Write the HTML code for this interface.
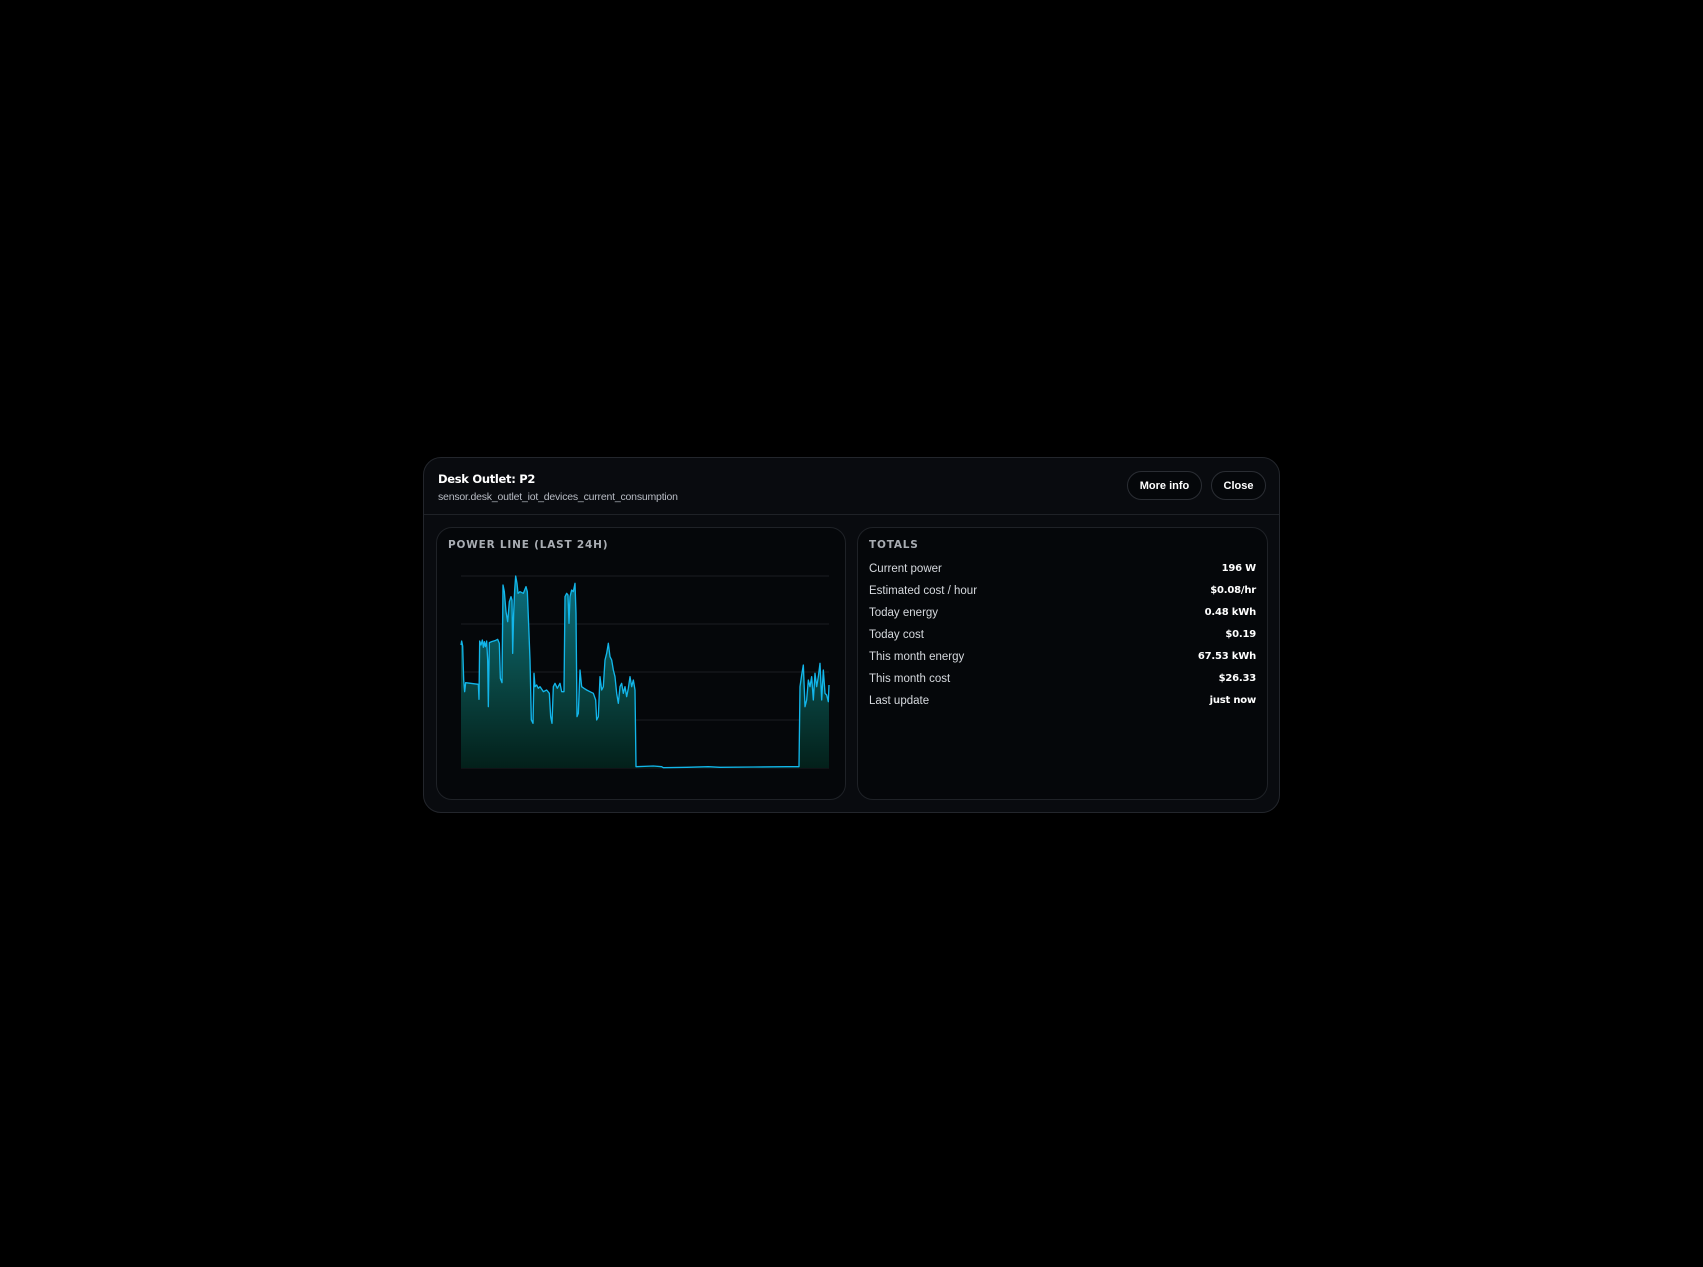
<!DOCTYPE html>
<html><head><meta charset="utf-8"><style>
html,body{margin:0;padding:0;background:#000;width:1703px;height:1267px;overflow:hidden;font-family:"DejaVu Sans","Liberation Sans",sans-serif;}
.modal{position:absolute;left:423px;top:457px;width:857px;height:356px;background:#090b0f;border:1px solid #23262c;border-radius:18px;box-sizing:border-box;}
.hdr{position:absolute;left:0;top:0;right:0;height:56px;border-bottom:1px solid #1f2227;}
.title{position:absolute;left:14px;top:14px;color:#fff;font-weight:bold;font-size:11.5px;letter-spacing:-0.3px;}
.sub{position:absolute;left:14px;top:33px;color:#b8bcc4;font-size:10.5px;letter-spacing:-0.2px;font-family:"Liberation Sans",sans-serif;}
.btn{position:absolute;top:13px;height:29px;border:1px solid #2a2d33;border-radius:15px;background:#05070a;color:#fff;font-weight:bold;font-size:11px;line-height:28px;text-align:center;box-sizing:border-box;font-family:"Liberation Sans",sans-serif;}
.panel{position:absolute;top:69px;height:273px;background:#05070a;border:1px solid #1f2227;border-radius:16px;box-sizing:border-box;}
.ph{position:absolute;left:11px;top:11px;color:#a9adb3;font-weight:bold;font-size:10.5px;letter-spacing:0.8px;}
.row{position:absolute;left:11px;right:11px;height:22px;font-size:11px;line-height:22px;}
.row .k{color:#d6d9de;font-family:"Liberation Sans",sans-serif;font-size:11.5px}
.row .v{position:absolute;right:0;top:0;color:#fff;font-weight:bold;font-size:10px;letter-spacing:-0.2px;}
</style></head><body>
<div class="modal">
 <div class="hdr">
  <div class="title">Desk Outlet: P2</div>
  <div class="sub">sensor.desk_outlet_iot_devices_current_consumption</div>
  <div class="btn" style="left:703px;width:75px;">More info</div>
  <div class="btn" style="left:787px;width:55px;">Close</div>
 </div>
 <div class="panel" style="left:12px;width:410px;"><div class="ph">POWER LINE (LAST 24H)</div></div>
 <div class="panel" style="left:433px;width:411px;">
  <div class="ph">TOTALS</div>
  <div class="row" style="top:30px"><span class="k">Current power</span><span class="v">196 W</span></div>
  <div class="row" style="top:52px"><span class="k">Estimated cost / hour</span><span class="v">$0.08/hr</span></div>
  <div class="row" style="top:74px"><span class="k">Today energy</span><span class="v">0.48 kWh</span></div>
  <div class="row" style="top:96px"><span class="k">Today cost</span><span class="v">$0.19</span></div>
  <div class="row" style="top:118px"><span class="k">This month energy</span><span class="v">67.53 kWh</span></div>
  <div class="row" style="top:140px"><span class="k">This month cost</span><span class="v">$26.33</span></div>
  <div class="row" style="top:162px"><span class="k">Last update</span><span class="v">just now</span></div>
 </div>
</div>
<svg style="position:absolute;left:420px;top:560px" width="440" height="260" viewBox="0 0 1320 780">
<defs><linearGradient id="g" x1="0" y1="0" x2="0" y2="1"><stop offset="0" stop-color="#0b6f80"/><stop offset="0.5" stop-color="#0a4a48"/><stop offset="1" stop-color="#03201a"/></linearGradient></defs>
<g stroke="#1a1d22" stroke-width="3"><line x1="123" y1="48" x2="1227" y2="48"/><line x1="123" y1="192" x2="1227" y2="192"/><line x1="123" y1="336" x2="1227" y2="336"/><line x1="123" y1="480" x2="1227" y2="480"/><line x1="123" y1="624" x2="1227" y2="624"/></g>
<path id="p" fill="url(#g)" d="M123,624 L123,255 125,243 128,258 131,360 134,395 137,368 175,373 177,418 179,243 183,255 187,240 190,262 193,245 196,260 200,243 203,300 205,440 208,248 215,245 225,242 233,238 238,250 241,355 246,368 249,75 253,95 258,155 263,185 268,125 273,110 276,120 278,280 281,160 284,90 287,48 291,70 294,100 300,95 310,100 318,80 322,95 326,195 330,300 334,480 339,490 342,340 345,380 350,375 355,385 360,380 370,395 380,390 388,400 392,470 396,490 400,380 405,370 412,385 420,370 425,395 432,395 435,110 440,100 444,105 447,190 450,110 455,90 460,95 465,70 468,160 471,470 475,460 480,330 485,380 492,385 500,390 510,395 520,400 527,420 530,480 535,470 540,350 545,390 550,380 555,300 560,280 565,250 570,290 575,300 580,330 585,350 590,400 595,430 600,380 605,370 610,400 615,380 620,410 625,385 630,350 635,380 640,360 645,390 648,620 700,618 725,620 730,623 800,622 865,620 900,622 1000,621 1100,620 1137,620 1140,380 1145,345 1150,315 1155,440 1160,420 1165,360 1170,380 1175,350 1180,420 1185,340 1190,380 1195,350 1200,310 1205,420 1210,330 1215,400 1220,405 1225,425 1227,375 L1227,624 Z"/>
<path fill="none" stroke="#12b6ea" stroke-width="4" stroke-linejoin="round" d="M123,255 125,243 128,258 131,360 134,395 137,368 175,373 177,418 179,243 183,255 187,240 190,262 193,245 196,260 200,243 203,300 205,440 208,248 215,245 225,242 233,238 238,250 241,355 246,368 249,75 253,95 258,155 263,185 268,125 273,110 276,120 278,280 281,160 284,90 287,48 291,70 294,100 300,95 310,100 318,80 322,95 326,195 330,300 334,480 339,490 342,340 345,380 350,375 355,385 360,380 370,395 380,390 388,400 392,470 396,490 400,380 405,370 412,385 420,370 425,395 432,395 435,110 440,100 444,105 447,190 450,110 455,90 460,95 465,70 468,160 471,470 475,460 480,330 485,380 492,385 500,390 510,395 520,400 527,420 530,480 535,470 540,350 545,390 550,380 555,300 560,280 565,250 570,290 575,300 580,330 585,350 590,400 595,430 600,380 605,370 610,400 615,380 620,410 625,385 630,350 635,380 640,360 645,390 648,620 700,618 725,620 730,623 800,622 865,620 900,622 1000,621 1100,620 1137,620 1140,380 1145,345 1150,315 1155,440 1160,420 1165,360 1170,380 1175,350 1180,420 1185,340 1190,380 1195,350 1200,310 1205,420 1210,330 1215,400 1220,405 1225,425 1227,375"/>
</svg>
</body></html>
